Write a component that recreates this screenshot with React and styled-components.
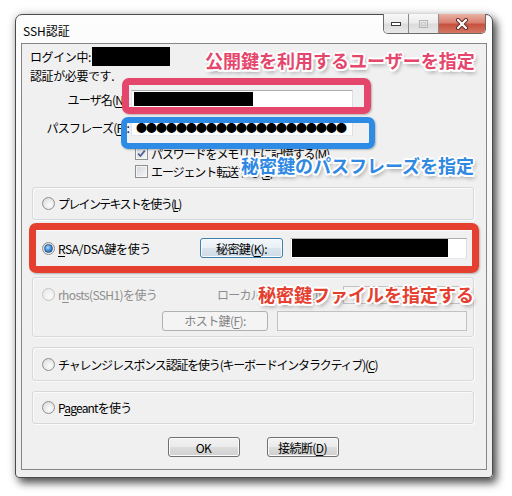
import React from 'react';
import styled, { createGlobalStyle } from 'styled-components';

const FONT = '"Noto Sans CJK JP", "Noto Sans", "DejaVu Sans", sans-serif';

const Global = createGlobalStyle`
  html, body { margin: 0; padding: 0; background: #fff; }
  body { font-family: ${FONT}; font-size: 12px; color: #000; }
  * { box-sizing: border-box; }
`;

const Page = styled.div`
  position: relative;
  width: 512px;
  height: 496px;
  overflow: hidden;
  padding: 14px 0 0 15px;
  background: #fff;
`;

const Window = styled.div`
  width: 478px;
  height: 464px;
  border: 1px solid #4b4b4b;
  border-radius: 7px 7px 4px 4px;
  background: linear-gradient(180deg, #fdfdfd 0%, #f5f5f5 60%, #eeeeee 100%);
  box-shadow: 4px 5px 8px rgba(0, 0, 0, 0.65), 0 0 10px rgba(0, 0, 0, 0.18);
  padding: 0 5px 7px 5px;
  display: flex;
  flex-direction: column;
`;

const TitleBar = styled.div`
  height: 28px;
  display: flex;
  align-items: flex-start;
  justify-content: space-between;
`;

const Title = styled.div`
  padding: 8px 0 0 2px;
  font-size: 12px;
  line-height: 15px;
  color: #000;
`;

const Caption = styled.div`
  display: flex;
  margin-top: -1px;
  margin-right: 1px;
  height: 20px;
  border: 1px solid #6a6a6a;
  border-top: none;
  border-radius: 0 0 5px 5px;
  overflow: hidden;
`;

const CapBtn = styled.div`
  width: ${(p) => p.$w}px;
  height: 100%;
  display: flex;
  align-items: center;
  justify-content: center;
  background: ${(p) =>
    p.$close
      ? 'linear-gradient(180deg,#eab1a4 0%,#d98071 45%,#c8503f 55%,#d47764 100%)'
      : 'linear-gradient(180deg,#f8f8f8 0%,#ececec 45%,#dcdcdc 55%,#e8e8e8 100%)'};
  & + & {
    border-left: 1px solid #8a8a8a;
  }
`;

const Client = styled.div`
  flex: 1;
  border: 1px solid #868686;
  background: #f0f0f0;
  display: flex;
  flex-direction: column;
  padding: 0 12px 0 10px;
`;

const Top = styled.div`
  margin-left: -2px;
  display: flex;
  flex-direction: column;
`;

const Line = styled.div`
  height: ${(p) => p.$h || 18}px;
  margin-top: ${(p) => p.$mt || 0}px;
  display: flex;
  align-items: center;
  letter-spacing: -0.4px;
  white-space: nowrap;
`;

const Redact = styled.div`
  width: ${(p) => p.$w}px;
  height: ${(p) => p.$h}px;
  margin-left: ${(p) => p.$ml || 0}px;
  background: #000;
  flex: none;
`;

const FieldLabel = styled.div`
  width: 99px;
  text-align: right;
  margin-right: 2px;
  letter-spacing: -0.8px;
  white-space: nowrap;
`;

const Input = styled.div`
  width: ${(p) => p.$w}px;
  height: ${(p) => p.$h || 18}px;
  margin-left: ${(p) => p.$ml || 0}px;
  margin-right: ${(p) => p.$mr || 0}px;
  flex: none;
  border: 1px solid;
  border-color: ${(p) =>
    p.$disabled ? '#c2c2c2' : '#abadb3 #dbdfe6 #e3e9ef #e2e3ea'};
  background: ${(p) => (p.$disabled ? '#f4f4f4' : '#fff')};
  display: flex;
  align-items: center;
  padding: 1px 2px;
  overflow: hidden;
`;

const Dots = styled.span`
  font-family: "Noto Sans CJK JP", sans-serif;
  font-size: 11px;
  letter-spacing: -1px;
  line-height: 1;
  margin-left: 2px;
  color: #000;
`;

const CheckRow = styled.div`
  height: 18px;
  margin-left: 105px;
  margin-top: ${(p) => p.$mt || 0}px;
  display: flex;
  align-items: center;
  letter-spacing: -1.1px;
  white-space: nowrap;
`;

const CheckBox = styled.span`
  width: 13px;
  height: 13px;
  flex: none;
  border: 1px solid #8e8f8f;
  background: linear-gradient(135deg, #d3d6dc 0%, #f7f7f7 100%);
  box-shadow: inset 0 0 0 1px #f6f6f6;
  margin-right: 3px;
  display: flex;
  align-items: center;
  justify-content: center;
`;

const Group = styled.div`
  height: ${(p) => p.$h}px;
  margin-top: ${(p) => p.$mt}px;
  border: 1px solid #d5d9dc;
  border-radius: 3px;
  box-shadow: inset 1px 1px 0 #fbfbfb, 1px 1px 0 #fbfbfb;
  display: flex;
  flex-direction: ${(p) => (p.$col ? 'column' : 'row')};
  align-items: ${(p) => (p.$col ? 'stretch' : 'center')};
  padding: ${(p) => (p.$col ? '7px 6px 0 9px' : '0 6px 0 9px')};
`;

const Row = styled.div`
  height: ${(p) => p.$h}px;
  margin-top: ${(p) => p.$mt || 0}px;
  display: flex;
  align-items: center;
  justify-content: ${(p) => (p.$end ? 'flex-end' : 'flex-start')};
`;

const Radio = styled.span`
  width: 13px;
  height: 13px;
  flex: none;
  border-radius: 50%;
  border: 1px solid ${(p) => (p.$disabled ? '#c4c4c4' : '#8e8f8f')};
  background: ${(p) =>
    p.$disabled
      ? 'radial-gradient(circle at 60% 65%, #fafafa 0%, #ececec 70%, #e2e2e2 100%)'
      : 'radial-gradient(circle at 60% 65%, #fdfdfd 0%, #e6e6e6 60%, #cfcfcf 100%)'};
  display: flex;
  align-items: center;
  justify-content: center;
  &::after {
    content: '';
    display: ${(p) => (p.$checked ? 'block' : 'none')};
    width: 7px;
    height: 7px;
    border-radius: 50%;
    background: radial-gradient(circle at 40% 35%, #a9dcff 0%, #3d86cf 55%, #1b4f8f 100%);
    border: 1px solid #2a5a94;
  }
`;

const RadioLabel = styled.span`
  margin-left: 3px;
  width: ${(p) => (p.$w ? `${p.$w}px` : 'auto')};
  flex: none;
  white-space: nowrap;
  letter-spacing: ${(p) => p.$ls ?? -0.6}px;
  color: ${(p) => (p.$disabled ? '#8d8d8d' : '#000')};
`;

const Text = styled.span`
  width: ${(p) => p.$w}px;
  flex: none;
  white-space: nowrap;
  letter-spacing: -0.8px;
  color: ${(p) => (p.$disabled ? '#8d8d8d' : '#000')};
`;

const Button = styled.div`
  width: ${(p) => p.$w}px;
  height: 20px;
  flex: none;
  border: 1px solid ${(p) => (p.$focus ? '#3c7fb1' : p.$disabled ? '#adb2b5' : '#707070')};
  border-radius: 3px;
  background: ${(p) =>
    p.$disabled
      ? '#f4f4f4'
      : p.$focus
      ? 'linear-gradient(180deg, #f2f7fb 0%, #e8eff5 50%, #d9e4ec 50%, #d0dce6 100%)'
      : 'linear-gradient(180deg, #f2f2f2 0%, #ebebeb 50%, #dddddd 50%, #cfcfcf 100%)'};
  box-shadow: inset 0 0 0 1px ${(p) => (p.$disabled ? '#f4f4f4' : '#fbfbfb')};
  display: flex;
  align-items: center;
  justify-content: center;
  letter-spacing: -0.6px;
  white-space: nowrap;
  color: ${(p) => (p.$disabled ? '#838383' : '#000')};
`;

const ButtonBar = styled.div`
  margin-top: 13px;
  display: flex;
  justify-content: center;
  gap: 27px;
`;

const U = styled.u`
  text-decoration: underline;
  text-underline-offset: 2px;
`;

/* annotation overlays */
const Frame = styled.div`
  position: absolute;
  left: ${(p) => p.$x}px;
  top: ${(p) => p.$y}px;
  width: ${(p) => p.$w}px;
  height: ${(p) => p.$h}px;
  border: ${(p) => p.$b}px solid ${(p) => p.$c};
  border-radius: 7px;
  box-shadow: 1px 1px 2px rgba(0, 0, 0, 0.25);
  pointer-events: none;
`;

const Note = styled.div`
  position: absolute;
  left: ${(p) => p.$x}px;
  top: ${(p) => p.$y}px;
  font-family: "Noto Sans CJK JP", sans-serif;
  font-weight: 700;
  font-size: 18px;
  line-height: 1;
  white-space: nowrap;
  color: ${(p) => p.$c};
  text-shadow: 2px 0 0 #fff, -2px 0 0 #fff, 0 2px 0 #fff, 0 -2px 0 #fff,
    1.5px 1.5px 0 #fff, -1.5px 1.5px 0 #fff, 1.5px -1.5px 0 #fff, -1.5px -1.5px 0 #fff,
    2px 3px 4px rgba(0, 0, 0, 0.45);
`;

export default function App() {
  return (
    <Page>
      <Global />
      <Window>
        <TitleBar>
          <Title>SSH認証</Title>
          <Caption>
            <CapBtn $w={24}>
              <svg width="12" height="6" viewBox="0 0 12 6">
                <rect x="1.5" y="1.5" width="9" height="3" fill="#fff" stroke="#3a3a3a" strokeWidth="1" />
              </svg>
            </CapBtn>
            <CapBtn $w={30}>
              <svg width="11" height="10" viewBox="0 0 11 10">
                <rect x="1.5" y="1.5" width="8" height="7" fill="none" stroke="#b4b4b4" strokeWidth="1" />
                <rect x="3.5" y="3.5" width="4" height="3" fill="none" stroke="#c8c8c8" strokeWidth="1" />
              </svg>
            </CapBtn>
            <CapBtn $w={47} $close>
              <svg width="14" height="12" viewBox="0 0 14 12">
                <path d="M3 2 L11 10 M11 2 L3 10" stroke="#5a2a22" strokeWidth="4" strokeLinecap="round" />
                <path d="M3 2 L11 10 M11 2 L3 10" stroke="#fff" strokeWidth="2.2" strokeLinecap="round" />
              </svg>
            </CapBtn>
          </Caption>
        </TitleBar>
        <Client>
          <Top>
            <Line $h={19} $mt={3}>
              ログイン中:<Redact $w={78} $h={19} $ml={1} />
            </Line>
            <Line $h={18}>認証が必要です.</Line>
            <Line $h={18} $mt={6}>
              <FieldLabel>
                ユーザ名(<U>N</U>):
              </FieldLabel>
              <Input $w={222}>
                <Redact $w={119} $h={14} />
              </Input>
            </Line>
            <Line $h={18} $mt={10}>
              <FieldLabel>
                パスフレーズ(<U>P</U>):
              </FieldLabel>
              <Input $w={222}>
                <Dots>●●●●●●●●●●●●●●●●●●●●●</Dots>
              </Input>
            </Line>
            <CheckRow $mt={8}>
              <CheckBox>
                <svg width="9" height="9" viewBox="0 0 9 9">
                  <path d="M1.2 4.6 L3.4 7 L7.8 1.6" fill="none" stroke="#4a5f97" strokeWidth="1.7" />
                </svg>
              </CheckBox>
              パスワードをメモリ上に記憶する(<U>M</U>)
            </CheckRow>
            <CheckRow>
              <CheckBox />
              エージェント転送する(<U>G</U>)
            </CheckRow>
          </Top>

          <Group $h={33} $mt={7}>
            <Radio />
            <RadioLabel $ls={-1.7}>
              プレインテキストを使う(<U>L</U>)
            </RadioLabel>
          </Group>

          <Group $h={38} $mt={9}>
            <Radio $checked />
            <RadioLabel $w={142} $ls={-0.4}>
              <U>R</U>SA/DSA鍵を使う
            </RadioLabel>
            <Button $w={83} $focus>
              秘密鍵(<U>K</U>):
            </Button>
            <Input $w={177} $h={21} $ml={7}>
              <Redact $w={156} $h={18} $ml={-1} />
            </Input>
          </Group>

          <Group $h={60} $mt={10} $col>
            <Row $h={19}>
              <Radio $disabled />
              <RadioLabel $w={159} $disabled>
                r<U>h</U>osts(SSH1)を使う
              </RadioLabel>
              <Text $w={126} $disabled>
                ローカルユーザ名(<U>U</U>):
              </Text>
              <Input $w={122} $h={18} $mr={2} $disabled />
            </Row>
            <Row $h={21} $mt={6} $end>
              <Button $w={106} $disabled>
                ホスト鍵(<U>F</U>):
              </Button>
              <Input $w={190} $h={20} $ml={9} $disabled />
            </Row>
          </Group>

          <Group $h={34} $mt={10}>
            <Radio />
            <RadioLabel $ls={-1.2}>
              チャレンジレスポンス認証を使う(キーボードインタラクティブ)(<U>C</U>)
            </RadioLabel>
          </Group>

          <Group $h={33} $mt={10}>
            <Radio />
            <RadioLabel $ls={-0.8}>
              P<U>a</U>geantを使う
            </RadioLabel>
          </Group>

          <ButtonBar>
            <Button $w={72}>OK</Button>
            <Button $w={72}>
              接続断(<U>D</U>)
            </Button>
          </ButtonBar>
        </Client>
      </Window>

      <Frame $x={122} $y={78} $w={249} $h={36} $b={7} $c="#e5466c" />
      <Note $x={205} $y={51} $c="#e5466c">
        公開鍵を利用するユーザーを指定
      </Note>
      <Frame $x={121} $y={117} $w={254} $h={32} $b={6} $c="#2e8be5" />
      <Note $x={241} $y={156} $c="#2f89e2">
        秘密鍵のパスフレーズを指定
      </Note>
      <Frame $x={29} $y={223} $w={450} $h={50} $b={7} $c="#e5402f" />
      <Note $x={258} $y={285} $c="#e5402f">
        秘密鍵ファイルを指定する
      </Note>
    </Page>
  );
}
